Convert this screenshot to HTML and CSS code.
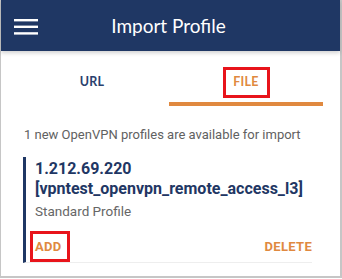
FILE: index.html
```html
<!DOCTYPE html>
<html lang="en">
<head>
  <meta charset="UTF-8" />
  <title>Import Profile</title>
  <link rel="stylesheet" href="styles.css">
</head>
<body>
  <div class="app">
    <header class="topbar">
      <svg class="menu" width="24" height="16" viewBox="0 0 24 16">
        <rect x="0" y="0" width="24" height="2.4" fill="#fff"/>
        <rect x="0" y="6.6" width="24" height="2.4" fill="#fff"/>
        <rect x="0" y="13.2" width="24" height="2.4" fill="#fff"/>
      </svg>
      <h1>Import Profile</h1>
    </header>

    <nav class="tabs">
      <div class="tab">URL</div>
      <div class="tab active"><span class="mark">FILE</span></div>
    </nav>

    <p class="notice">1 new OpenVPN profiles are available for import</p>

    <div class="profile">
      <div class="name">1.212.69.220<br>[vpntest_openvpn_remote_access_l3]</div>
      <div class="type">Standard Profile</div>
      <div class="actions">
        <span class="mark add">ADD</span>
        <span>DELETE</span>
      </div>
    </div>
  </div>
</body>
</html>
```
FILE: styles.css
```css
* { margin: 0; padding: 0; box-sizing: border-box; }

body {
  font-family: Roboto, "Liberation Sans", sans-serif;
  background: #fff;
  width: 342px;
  height: 279px;
  overflow: hidden;
}

.app {
  height: 278px;
  border: 1px solid #c6c6c6;
  border-top: none;
  border-right-width: 2px;
  border-bottom-width: 2px;
}

.topbar {
  position: relative;
  height: 51px;
  background: #1f3764;
  display: flex;
  align-items: center;
  justify-content: center;
  box-shadow: 0 2px 4px rgba(0,0,0,0.18);
}

.menu {
  position: absolute;
  left: 13px;
  top: 19px;
}

.topbar h1 {
  font-family: Lato, sans-serif;
  font-weight: 400;
  font-size: 19px;
  color: #fff;
  margin-right: 4px;
}

.tabs {
  display: flex;
  margin: 0 17px 0 14px;
  height: 55px;
}

.tab {
  flex: 1;
  display: flex;
  align-items: center;
  justify-content: center;
  font-family: Lato, sans-serif;
  font-weight: 700;
  font-size: 12.5px;
  letter-spacing: 0.3px;
  color: #2a416d;
  padding-top: 5px;
}

.tab.active {
  color: #e0893f;
  border-bottom: 4px solid #e0893f;
  padding-top: 9px;
}

.mark { position: relative; }

.mark::after {
  content: '';
  position: absolute;
  top: -7px; bottom: -9px;
  left: -10px; right: -11px;
  border: 3px solid #e8141b;
}

.notice {
  margin: 21px 0 0 23px;
  font-size: 13px;
  color: #616161;
}

.profile {
  margin: 15px 28px 0 22px;
  border-left: 3px solid #1f3764;
  border-bottom: 1px solid #eee;
  padding: 2px 0 8px 9px;
}

.name {
  font-size: 16px;
  font-weight: 700;
  line-height: 20px;
  color: #1f3764;
}

.type {
  margin-top: 4px;
  font-size: 13.5px;
  color: #666;
}

.actions {
  display: flex;
  justify-content: space-between;
  margin-top: 20px;
  font-size: 13px;
  font-weight: 700;
  color: #e0893f;
  letter-spacing: 0.3px;
}

.mark.add::after {
  top: -8px; bottom: -8px;
  left: -5px; right: -8px;
}
```
